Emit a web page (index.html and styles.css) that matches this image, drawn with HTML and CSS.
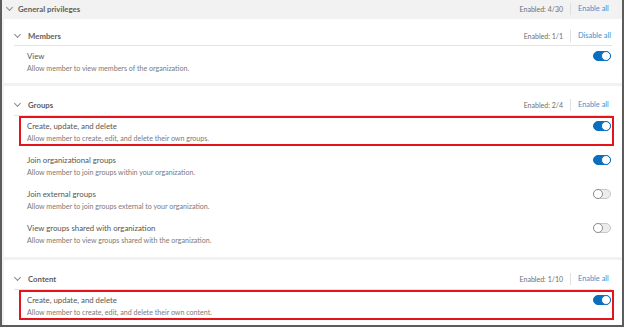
FILE: index.html
```html
<!DOCTYPE html>
<html lang="en">
<head>
  <meta charset="UTF-8" />
  <title>General privileges</title>
  <link rel="stylesheet" href="styles.css">
</head>
<body>
  <div class="frame">
    <div class="top-head">
      <span class="chev"></span>
      <span class="top-title">General privileges</span>
      <span class="count">Enabled: 4/30</span>
      <span class="sep"></span>
      <a class="link">Enable all</a>
    </div>

    <div class="panel">
      <div class="section first">
        <div class="sec-head">
          <span class="chev"></span>
          <span class="sec-title">Members</span>
          <span class="count">Enabled: 1/1</span>
          <span class="sep"></span>
          <a class="link">Disable all</a>
        </div>
        <div class="row">
          <div class="text">
            <div class="title">View</div>
            <div class="desc">Allow member to view members of the organization.</div>
          </div>
          <span class="toggle on"></span>
        </div>
      </div>

      <div class="section">
        <div class="sec-head">
          <span class="chev"></span>
          <span class="sec-title">Groups</span>
          <span class="count">Enabled: 2/4</span>
          <span class="sep"></span>
          <a class="link">Enable all</a>
        </div>
        <div class="row marked">
          <div class="text">
            <div class="title">Create, update, and delete</div>
            <div class="desc">Allow member to create, edit, and delete their own groups.</div>
          </div>
          <span class="toggle on"></span>
        </div>
        <div class="row">
          <div class="text">
            <div class="title">Join organizational groups</div>
            <div class="desc">Allow member to join groups within your organization.</div>
          </div>
          <span class="toggle on"></span>
        </div>
        <div class="row">
          <div class="text">
            <div class="title">Join external groups</div>
            <div class="desc">Allow member to join groups external to your organization.</div>
          </div>
          <span class="toggle"></span>
        </div>
        <div class="row">
          <div class="text">
            <div class="title">View groups shared with organization</div>
            <div class="desc">Allow member to view groups shared with the organization.</div>
          </div>
          <span class="toggle"></span>
        </div>
      </div>

      <div class="section last">
        <div class="sec-head">
          <span class="chev"></span>
          <span class="sec-title">Content</span>
          <span class="count">Enabled: 1/10</span>
          <span class="sep"></span>
          <a class="link">Enable all</a>
        </div>
        <div class="row marked">
          <div class="text">
            <div class="title">Create, update, and delete</div>
            <div class="desc">Allow member to create, edit, and delete their own content.</div>
          </div>
          <span class="toggle on"></span>
        </div>
      </div>
    </div>
  </div>
</body>
</html>
```
FILE: styles.css
```css
* { box-sizing: border-box; margin: 0; padding: 0; }
body {
  font-family: 'Lato', 'Open Sans', sans-serif;
  background: #fff;
  color: #4c4c4c;
  line-height: 10px;
}
.frame {
  width: 624px; height: 327px;
  border: 2px solid #5c5c5c; border-top: 0;
  background: #f2f2f2;
  overflow: hidden;
}
.top-head {
  display: flex; align-items: center;
  height: 17px; padding: 0 10px 0 3px;
}
.top-title { font-size: 7.8px; font-weight: 700; color: #5e5e5e; margin-left: 4px; flex: 1; }
.panel {
  margin-left: 2px; margin-top: 2px;
  display: flex; flex-direction: column; gap: 3px;
}
.section { background: #fff; padding: 0 10px 9px 10px; }
.section.first { padding-bottom: 7px; }
.section.last { padding-bottom: 10px; }
.sec-head {
  display: flex; align-items: center;
  height: 30px; padding-top: 9px;
  border-bottom: 1px solid #e3e3e3;
}
.section.first .sec-head { height: 27px; padding-top: 7px; }
.sec-head .chev { margin-left: 1px; }
.sec-title { font-size: 7.8px; font-weight: 700; color: #5e5e5e; margin-left: 6px; flex: 1; }
.chev {
  width: 5px; height: 5px;
  border-right: 1px solid #8a8a8a; border-bottom: 1px solid #8a8a8a;
  transform: rotate(45deg);
  margin: 0 2px 3px;
}
.count { font-size: 7px; color: #6e6e6e; }
.sep { width: 1px; height: 12px; background: #e0e0e0; margin: 0 7px; }
.link { font-size: 7.4px; color: #3a8fd0; width: 34px; }
.row {
  display: flex; align-items: flex-start;
  height: 30px;
  margin: 0 -2px 4px 5px;
  padding: 5px 3px 0 8px;
}
.row:last-child { margin-bottom: 0; }
.row.marked { box-shadow: inset 0 0 0 2px #e3141c; }
.text { flex: 1; }
.title { font-size: 7.8px; color: #555; }
.desc { font-size: 7.1px; color: #7a7a7a; margin-top: 3px; }
.toggle {
  position: relative;
  width: 18px; height: 10px;
  border-radius: 5px;
  background: #ececec; border: 1px solid #c8c8c8;
}
.toggle::after {
  content: ''; position: absolute; top: -1px; left: -1px;
  width: 10px; height: 10px; border-radius: 50%;
  background: #fff; border: 1px solid #8f8f8f; box-sizing: border-box;
}
.toggle.on { background: #0b6fc0; border-color: #0b6fc0; }
.toggle.on::after { left: auto; right: -1px; border-color: #0b6fc0; }
```
